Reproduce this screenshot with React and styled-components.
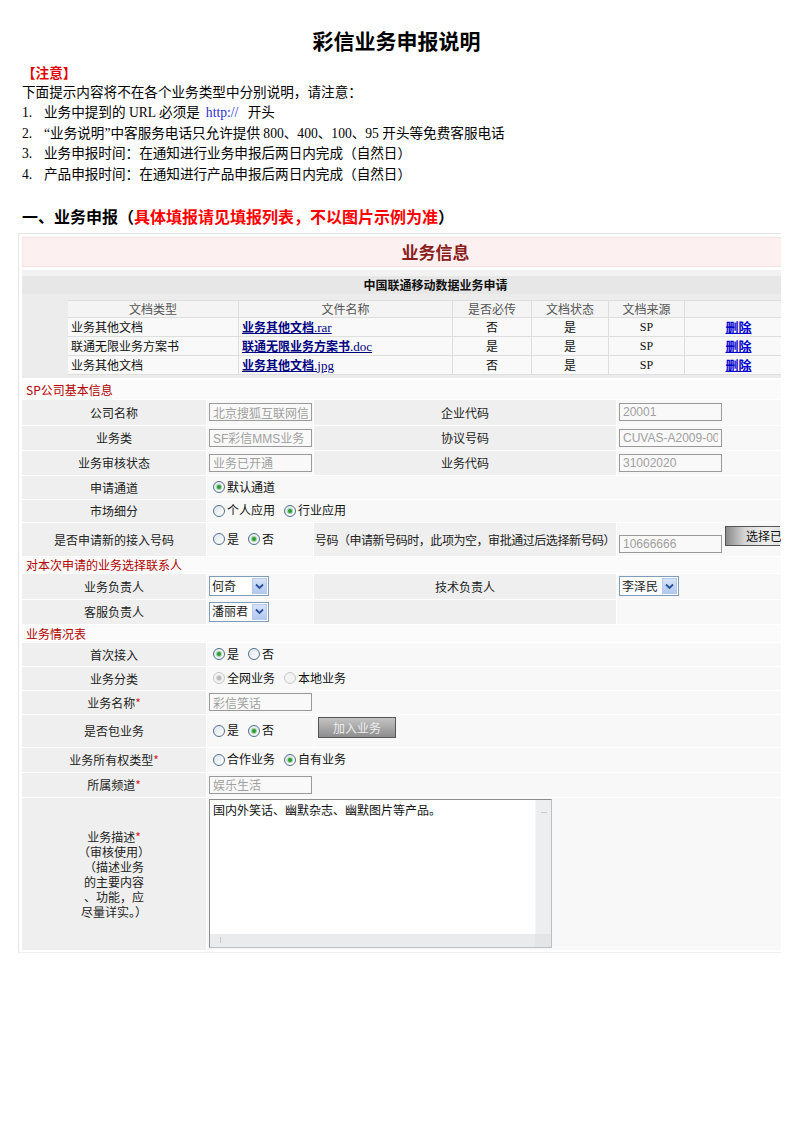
import React from "react";
import styled, { createGlobalStyle } from "styled-components";

const GlobalStyle = createGlobalStyle`
  body {
    margin: 0;
    background: #fff;
  }
`;

const Page = styled.div`
  width: 793px;
  padding-top: 28px;
  font-family: "Liberation Serif", "Noto Sans CJK SC", serif;
  color: #000;
`;

const Title = styled.h1`
  margin: 0;
  text-align: center;
  font: bold 21px/24px "Noto Sans CJK SC", sans-serif;
`;

const Notes = styled.div`
  margin-top: 10px;
  padding-left: 22px;
  font-size: 13.6px;
  line-height: 20.6px;
`;

const Attention = styled.div`
  color: #e00000;
  font-weight: bold;
  font-family: "Noto Sans CJK SC", sans-serif;
`;

const NoteItem = styled.div`
  display: flex;
  span:first-child {
    width: 22px;
  }
`;

const Link = styled.span`
  color: #2b2bd0;
  margin: 0 6px;
`;

const Heading = styled.h2`
  margin: 19px 0 0 22px;
  font: bold 16px/22px "Noto Sans CJK SC", sans-serif;
  em {
    font-style: normal;
    color: #ff0000;
  }
`;

const FormFrame = styled.div`
  margin: 6px 0 0 18px;
  width: 762px;
  overflow: hidden;
  border-top: 1px solid #e6e6e6;
  border-left: 1px solid #e6e6e6;
  border-bottom: 1px solid #efefef;
`;

const FormInner = styled.div`
  width: 827px;
  padding: 3px 0 2px 3px;
  font: 12px/1.2 "Noto Sans CJK SC", sans-serif;
  color: #222;
`;

const InfoHeader = styled.div`
  height: 28px;
  line-height: 28px;
  background: #fdf0f0;
  border: 1px solid #f6e4e4;
  text-align: center;
  font-size: 17px;
  font-weight: bold;
  color: #8c1d1d;
`;

const AppBar = styled.div`
  margin-top: 3px;
  border-top: 6px solid #f2f2f2;
  height: 18px;
  line-height: 18px;
  background: #e7e7e7;
  text-align: center;
  font-weight: bold;
  color: #111;
`;

const DocArea = styled.div`
  background: #ececec;
  padding: 6px 0 3px 46px;
`;

const DocTable = styled.div`
  display: grid;
  grid-template-columns: 171px 214px 79px 77px 76px 108px 80px;
  border-top: 1px solid #dedede;
`;

const DocCell = styled.div`
  height: ${(p) => (p.$head ? 16 : 18)}px;
  line-height: ${(p) => (p.$head ? 16 : 18)}px;
  background: ${(p) => (p.$head ? "#f4f4f4" : "#f9f9f9")};
  border-bottom: 1px solid #dedede;
  border-right: 1px solid #dedede;
  text-align: ${(p) => (p.$left ? "left" : "center")};
  padding-left: ${(p) => (p.$left ? "3px" : "0")};
  color: ${(p) => (p.$head ? "#555" : "#111")};
  font-family: ${(p) => (p.$serif ? '"Liberation Serif", "Noto Sans CJK SC", serif' : "inherit")};
`;

const FileLink = styled.a`
  color: #000080;
  font-weight: bold;
  text-decoration: underline;
  small {
    font-family: "Liberation Serif", serif;
    font-weight: normal;
    font-size: 13px;
  }
`;

const DeleteLink = styled.a`
  color: #0000cc;
  font-weight: bold;
  text-decoration: underline;
  font-size: 13px;
`;

const SectionTitle = styled.div`
  margin-top: ${(p) => p.$mt || 1}px;
  height: ${(p) => p.$h}px;
  line-height: ${(p) => p.$h}px;
  padding-left: 4px;
  background: #fbfbfb;
  color: #b00000;
`;

const Row = styled.div`
  display: grid;
  grid-template-columns: 184px 106px 302px 1fr;
  column-gap: 1px;
  height: ${(p) => p.$h}px;
  margin-top: 1px;
`;

const LabelCell = styled.div`
  background: #efefef;
  display: flex;
  align-items: center;
  justify-content: center;
  text-align: center;
  line-height: 15px;
  white-space: nowrap;
  letter-spacing: ${(p) => (p.$tight ? "-0.45px" : "0")};
  grid-column: span ${(p) => p.$span || 1};
`;

const ValueCell = styled.div`
  background: #f8f8f8;
  display: flex;
  align-items: ${(p) => (p.$top ? "flex-start" : "center")};
  gap: ${(p) => p.$gap || 0}px;
  padding-left: ${(p) => (p.$pad != null ? p.$pad : 2)}px;
  grid-column: span ${(p) => p.$span || 1};
`;

const Star = styled.span`
  color: #e02020;
`;

const TextInput = styled.input`
  box-sizing: border-box;
  width: 103px;
  height: 18px;
  margin: ${(p) => (p.$low ? "12px 0 0 0" : "0")};
  align-self: ${(p) => (p.$low ? "flex-start" : "center")};
  padding: 0 3px;
  border: 1px solid #9a9a9a;
  background: #f9f9f9;
  color: #a0a0a0;
  font: 12px "Liberation Sans", "Noto Sans CJK SC", sans-serif;
  outline: none;
`;

const RadioItem = styled.label`
  display: inline-flex;
  align-items: center;
  gap: 2px;
  margin-right: 9px;
  color: #111;
`;

const RadioDot = styled.span`
  box-sizing: border-box;
  width: 12px;
  height: 12px;
  border-radius: 50%;
  border: 1px solid ${(p) => (p.$disabled ? "#c8c8c8" : "#4f6f93")};
  background: ${(p) => (p.$disabled ? "#f3f3f3" : "linear-gradient(135deg, #dfe5ea, #ffffff)")};
  display: inline-flex;
  align-items: center;
  justify-content: center;
  &::after {
    content: "";
    width: 4px;
    height: 4px;
    border-radius: 50%;
    background: ${(p) => (p.$disabled ? "#b8b8b8" : "#2f9a3a")};
    box-shadow: 0 0 0 1px ${(p) => (p.$disabled ? "#d8d8d8" : "#9fd59f")};
    display: ${(p) => (p.$checked ? "block" : "none")};
  }
`;

const SelectBox = styled.div`
  box-sizing: border-box;
  width: 60px;
  height: 20px;
  border: 1px solid #7f9db9;
  background: #fff;
  display: flex;
  align-items: center;
  justify-content: space-between;
  padding: 0 1px 0 2px;
  color: #222;
  font-size: 12px;
  white-space: nowrap;
  overflow: hidden;
`;

const SelectArrow = styled.span`
  box-sizing: border-box;
  flex: none;
  width: 15px;
  height: 16px;
  border: 1px solid #b5c9ec;
  background: linear-gradient(#d6e3f8, #b2c8ee);
  display: flex;
  align-items: center;
  justify-content: center;
`;

const GrayButton = styled.button`
  box-sizing: border-box;
  height: ${(p) => p.$h}px;
  width: ${(p) => p.$w}px;
  margin: ${(p) => p.$m || 0};
  align-self: ${(p) => (p.$self ? "flex-start" : "center")};
  padding: 0 0 0 ${(p) => p.$pl || 0}px;
  text-align: ${(p) => (p.$pl ? "left" : "center")};
  border: 1px solid #555;
  border-right: ${(p) => (p.$open ? "none" : "1px solid #555")};
  background: ${(p) =>
    p.$dark
      ? "linear-gradient(#c4c4c4, #8d8d8d)"
      : "linear-gradient(to right, #8a8a8a, #d6d6d6 35%, #eeeeee 75%, #e2e2e2)"};
  color: ${(p) => (p.$dark ? "#ececec" : "#111")};
  font: 12px "Noto Sans CJK SC", sans-serif;
  white-space: nowrap;
`;

const TextBox = styled.div`
  box-sizing: border-box;
  margin-top: 1px;
  width: 343px;
  height: 149px;
  border: 1px solid #8c8c8c;
  border-right-color: #bfbfbf;
  border-bottom-color: #bfbfbf;
  background: #fff;
  display: grid;
  grid-template-columns: 1fr 16px;
  grid-template-rows: 1fr 13px;
`;

const TextContent = styled.div`
  padding: 3px 3px;
  color: #111;
`;

const VScroll = styled.div`
  background: #eceeef;
  border-left: 1px solid #f5f5f5;
  display: flex;
  flex-direction: column;
  align-items: center;
  padding-top: 12px;
  &::before {
    content: "";
    width: 6px;
    height: 1px;
    background: #c9c9c9;
  }
`;

const HScroll = styled.div`
  background: #e9ebec;
  display: flex;
  align-items: center;
  padding-left: 10px;
  &::before {
    content: "";
    width: 1px;
    height: 6px;
    background: #c9c9c9;
  }
`;

const Corner = styled.div`
  background: #e3e5e6;
`;

function Radio({ label, checked, disabled }) {
  return (
    <RadioItem>
      <RadioDot $checked={checked} $disabled={disabled} />
      {label}
    </RadioItem>
  );
}

function Select({ value }) {
  return (
    <SelectBox>
      {value}
      <SelectArrow>
        <svg width="9" height="7" viewBox="0 0 9 7">
          <path d="M1 1.5 L4.5 5 L8 1.5" fill="none" stroke="#2a4f9a" strokeWidth="1.8" />
        </svg>
      </SelectArrow>
    </SelectBox>
  );
}

const docs = [
  { type: "业务其他文档", name: "业务其他文档", ext: ".rar", must: "否" },
  { type: "联通无限业务方案书", name: "联通无限业务方案书", ext: ".doc", must: "是" },
  { type: "业务其他文档", name: "业务其他文档", ext: ".jpg", must: "否" },
];

const heads = ["文档类型", "文件名称", "是否必传", "文档状态", "文档来源", "", ""];

export default function App() {
  return (
    <Page>
      <GlobalStyle />
      <Title>彩信业务申报说明</Title>
      <Notes>
        <Attention>【注意】</Attention>
        <div>下面提示内容将不在各个业务类型中分别说明，请注意：</div>
        <NoteItem>
          <span>1.</span>
          <span>
            业务中提到的 URL 必须是<Link>http://</Link> 开头
          </span>
        </NoteItem>
        <NoteItem>
          <span>2.</span>
          <span>“业务说明”中客服务电话只允许提供 800、400、100、95 开头等免费客服电话</span>
        </NoteItem>
        <NoteItem>
          <span>3.</span>
          <span>业务申报时间：在通知进行业务申报后两日内完成（自然日）</span>
        </NoteItem>
        <NoteItem>
          <span>4.</span>
          <span>产品申报时间：在通知进行产品申报后两日内完成（自然日）</span>
        </NoteItem>
      </Notes>

      <Heading>
        一、业务申报（<em>具体填报请见填报列表，不以图片示例为准</em>）
      </Heading>

      <FormFrame>
        <FormInner>
          <InfoHeader>业务信息</InfoHeader>
          <AppBar>中国联通移动数据业务申请</AppBar>
          <DocArea>
            <DocTable>
              {heads.map((h, i) => (
                <DocCell key={i} $head>
                  {h}
                </DocCell>
              ))}
              {docs.map((d, i) => (
                <React.Fragment key={i}>
                  <DocCell $left>{d.type}</DocCell>
                  <DocCell $left>
                    <FileLink>
                      {d.name}
                      <small>{d.ext}</small>
                    </FileLink>
                  </DocCell>
                  <DocCell>{d.must}</DocCell>
                  <DocCell>是</DocCell>
                  <DocCell $serif>SP</DocCell>
                  <DocCell>
                    <DeleteLink>删除</DeleteLink>
                  </DocCell>
                  <DocCell />
                </React.Fragment>
              ))}
            </DocTable>
          </DocArea>

          <SectionTitle $mt={2} $h={19}>SP公司基本信息</SectionTitle>
          <Row $h={25}>
            <LabelCell>公司名称</LabelCell>
            <ValueCell>
              <TextInput readOnly value="北京搜狐互联网信息服务有限公司" />
            </ValueCell>
            <LabelCell>企业代码</LabelCell>
            <ValueCell>
              <TextInput readOnly value="20001" />
            </ValueCell>
          </Row>
          <Row $h={24}>
            <LabelCell>业务类</LabelCell>
            <ValueCell>
              <TextInput readOnly value="SF彩信MMS业务" />
            </ValueCell>
            <LabelCell>协议号码</LabelCell>
            <ValueCell>
              <TextInput readOnly value="CUVAS-A2009-002" />
            </ValueCell>
          </Row>
          <Row $h={24}>
            <LabelCell>业务审核状态</LabelCell>
            <ValueCell>
              <TextInput readOnly value="业务已开通" />
            </ValueCell>
            <LabelCell>业务代码</LabelCell>
            <ValueCell>
              <TextInput readOnly value="31002020" />
            </ValueCell>
          </Row>
          <Row $h={23}>
            <LabelCell>申请通道</LabelCell>
            <ValueCell $span={3} $pad={6}>
              <Radio label="默认通道" checked />
            </ValueCell>
          </Row>
          <Row $h={22}>
            <LabelCell>市场细分</LabelCell>
            <ValueCell $span={3} $pad={6}>
              <Radio label="个人应用" />
              <Radio label="行业应用" checked />
            </ValueCell>
          </Row>
          <Row $h={33}>
            <LabelCell>是否申请新的接入号码</LabelCell>
            <ValueCell $pad={6}>
              <Radio label="是" />
              <Radio label="否" checked />
            </ValueCell>
            <LabelCell $tight>号码（申请新号码时，此项为空，审批通过后选择新号码）</LabelCell>
            <ValueCell $gap={3}>
              <TextInput readOnly value="10666666" $low />
              <GrayButton $w={55} $h={20} $pl={20} $m="3px 0 0 0" $self $open>
                选择已
              </GrayButton>
            </ValueCell>
          </Row>

          <SectionTitle $h={16}>对本次申请的业务选择联系人</SectionTitle>
          <Row $h={25}>
            <LabelCell>业务负责人</LabelCell>
            <ValueCell>
              <Select value="何奇" />
            </ValueCell>
            <LabelCell>技术负责人</LabelCell>
            <ValueCell>
              <Select value="李泽民" />
            </ValueCell>
          </Row>
          <Row $h={24}>
            <LabelCell>客服负责人</LabelCell>
            <ValueCell>
              <Select value="潘丽君" />
            </ValueCell>
            <LabelCell />
            <ValueCell />
          </Row>

          <SectionTitle $h={17}>业务情况表</SectionTitle>
          <Row $h={23}>
            <LabelCell>首次接入</LabelCell>
            <ValueCell $span={3} $pad={6}>
              <Radio label="是" checked />
              <Radio label="否" />
            </ValueCell>
          </Row>
          <Row $h={23}>
            <LabelCell>业务分类</LabelCell>
            <ValueCell $span={3} $pad={6}>
              <Radio label="全网业务" checked disabled />
              <Radio label="本地业务" disabled />
            </ValueCell>
          </Row>
          <Row $h={23}>
            <LabelCell>
              业务名称<Star>*</Star>
            </LabelCell>
            <ValueCell $span={3}>
              <TextInput readOnly value="彩信笑话" />
            </ValueCell>
          </Row>
          <Row $h={32}>
            <LabelCell>是否包业务</LabelCell>
            <ValueCell $pad={6}>
              <Radio label="是" />
              <Radio label="否" checked />
            </ValueCell>
            <ValueCell $span={2} $pad={4}>
              <GrayButton $dark $w={78} $h={21} $m="0 0 6px 0">
                加入业务
              </GrayButton>
            </ValueCell>
          </Row>
          <Row $h={24}>
            <LabelCell>
              业务所有权类型<Star>*</Star>
            </LabelCell>
            <ValueCell $span={3} $pad={6}>
              <Radio label="合作业务" />
              <Radio label="自有业务" checked />
            </ValueCell>
          </Row>
          <Row $h={24}>
            <LabelCell>
              所属频道<Star>*</Star>
            </LabelCell>
            <ValueCell $span={3}>
              <TextInput readOnly value="娱乐生活" />
            </ValueCell>
          </Row>
          <Row $h={152}>
            <LabelCell>
              <div>
                业务描述<Star>*</Star>
                <br />（审核使用）
                <br />（描述业务
                <br />的主要内容
                <br />、功能，应
                <br />尽量详实。）
              </div>
            </LabelCell>
            <ValueCell $span={3} $top>
              <TextBox>
                <TextContent>国内外笑话、幽默杂志、幽默图片等产品。</TextContent>
                <VScroll />
                <HScroll />
                <Corner />
              </TextBox>
            </ValueCell>
          </Row>
        </FormInner>
      </FormFrame>
    </Page>
  );
}
